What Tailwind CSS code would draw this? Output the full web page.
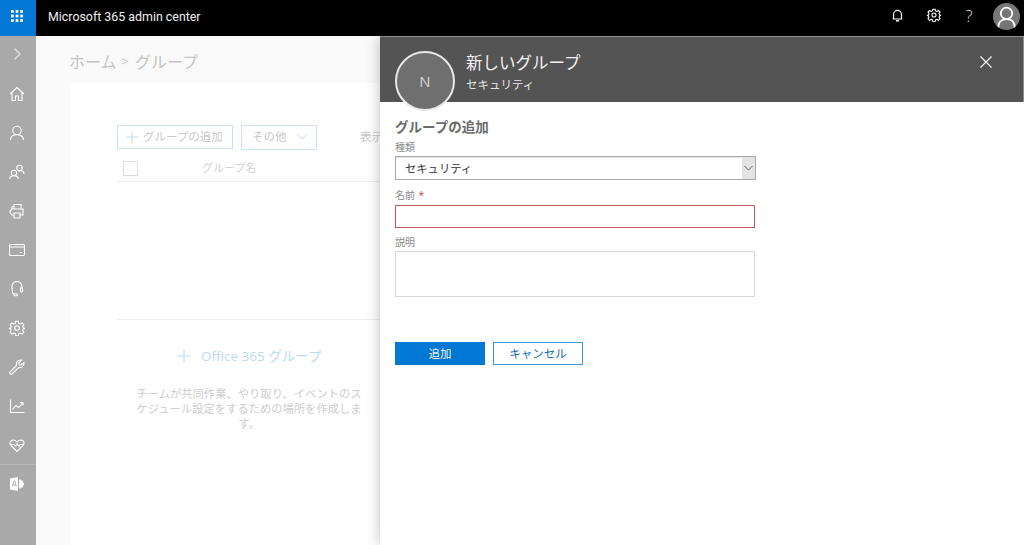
<!DOCTYPE html>
<html lang="ja">
  <head>
    <meta charset="UTF-8" />
    <title>Microsoft 365 admin center</title>
    <script src="https://cdn.jsdelivr.net/npm/@tailwindcss/browser@4"></script>
  </head>
  <body class="h-[545px] w-[1024px] overflow-hidden bg-[#fafafa] font-['Open_Sans','Noto_Sans_CJK_JP',sans-serif]">
    <!-- top bar -->
    <header class="flex h-[36px] items-center bg-black text-white">
      <div class="flex h-[36px] w-[36px] items-center justify-center bg-[#0078d4] pr-[2px] pb-[5px]">
        <svg width="12" height="12" viewBox="0 0 13 13" fill="#fff">
          <rect x="0" y="0" width="3" height="3" /><rect x="5" y="0" width="3" height="3" /><rect x="10" y="0" width="3" height="3" />
          <rect x="0" y="5" width="3" height="3" /><rect x="5" y="5" width="3" height="3" /><rect x="10" y="5" width="3" height="3" />
          <rect x="0" y="10" width="3" height="3" /><rect x="5" y="10" width="3" height="3" /><rect x="10" y="10" width="3" height="3" />
        </svg>
      </div>
      <div class="mb-[2px] ml-[12px] font-['Roboto'] text-[12.400px] text-[#f0f0f0]">Microsoft 365 admin center</div>
      <div class="ml-auto flex items-center text-white">
        <svg class="mr-[24px] mb-[6px]" width="11" height="13" viewBox="0 0 14 16" fill="none" stroke="#fff" stroke-width="1.400">
          <path d="M2 12V6.500a5 5 0 0 1 10 0V12l1 .5H1z" /><path d="M5 14.800h4" stroke-width="1.800" />
        </svg>
        <svg class="mr-[23px] mb-[6px]" width="14" height="14" viewBox="0 0 24 24" fill="none" stroke="#fff" stroke-width="1.800">
          <circle cx="12" cy="12" r="3.500" />
          <path d="M10 2h4l.6 3 2.300 1 2.600-1.700 2.800 2.800-1.700 2.600 1 2.300 3 .6v0l-3 .9-1 2.300 1.700 2.600-2.800 2.800-2.600-1.700-2.300 1-.6 3h-4l-.6-3-2.300-1-2.600 1.700-2.800-2.800 1.700-2.600-1-2.300-3-.9v0l3-.6 1-2.300-1.700-2.600 2.800-2.800 2.600 1.700 2.300-1z" />
        </svg>
        <div class="mr-[19px] mb-[6px] w-[10px] text-center text-[17px] leading-none font-light text-[#ddd]">?</div>
        <div class="mr-[4px] mb-[3px] flex h-[27px] w-[27px] items-center justify-center overflow-hidden rounded-full bg-[#777]">
          <svg width="27" height="27" viewBox="0 0 26 26" fill="none" stroke="#fff" stroke-width="1.700">
            <circle cx="13" cy="10" r="5.500" /><path d="M5 24c0-6 3.500-8.500 8-8.500s8 2.500 8 8.500" />
          </svg>
        </div>
      </div>
    </header>

    <div class="flex h-[509px]">
      <!-- left rail -->
      <nav class="flex w-[36px] shrink-0 flex-col items-center bg-[#a9a9a9] pr-[2px]">
        <div class="flex h-[38px] w-full items-center justify-center pb-[3px]">
          <svg width="16" height="16" viewBox="0 0 16 16" fill="none" stroke="#e8e8e8" stroke-width="1.100"><path d="M5.500 2.500l5.500 5.500-5.500 5.500" /></svg>
        </div>
        <div class="flex h-[39px] w-full items-center justify-center">
          <svg width="16" height="16" viewBox="0 0 16 16" fill="none" stroke="#fff" stroke-width="1.100"><path d="M1 8l7-6.500L15 8M3 6.500V14.500h3.500V10h3v4.500H13V6.500" /></svg>
        </div>
        <div class="flex h-[39px] w-full items-center justify-center">
          <svg width="16" height="16" viewBox="0 0 16 16" fill="none" stroke="#fff" stroke-width="1.100"><circle cx="8" cy="5.500" r="4.200" /><path d="M1.500 15c0-3.500 3-5.300 6.500-5.300s6.500 1.800 6.500 5.300" /></svg>
        </div>
        <div class="flex h-[39px] w-full items-center justify-center">
          <svg width="16" height="16" viewBox="0 0 16 16" fill="none" stroke="#fff" stroke-width="1.100"><circle cx="10.500" cy="4" r="2.700" /><circle cx="5" cy="9" r="2.700" /><path d="M.8 15c0-2.200 1.800-3.400 4.200-3.400S9.200 12.800 9.200 15M9.500 7.200c.6-.4 1.300-.5 2-.5 2 0 3.500 1.200 3.500 3.300" /></svg>
        </div>
        <div class="flex h-[39px] w-full items-center justify-center">
          <svg width="16" height="16" viewBox="0 0 16 16" fill="none" stroke="#fff" stroke-width="1.100"><path d="M5 6V1.500h7V6M5 12H3L1 9.500V8l2-2h11v6h-3" /><path d="M5 10h6v5H5zM3 3.500h2M3 3.500V6" /></svg>
        </div>
        <div class="flex h-[39px] w-full items-center justify-center">
          <svg width="16" height="16" viewBox="0 0 16 16" fill="none" stroke="#fff" stroke-width="1.100"><rect x=".5" y="2.500" width="15" height="11" rx="1" /><path d="M.5 5h15M10.500 10.500h2.500" /></svg>
        </div>
        <div class="flex h-[39px] w-full items-center justify-center">
          <svg width="16" height="16" viewBox="0 0 16 16" fill="none" stroke="#fff" stroke-width="1.100"><path d="M3 8V5.500a5 5 0 0 1 10 0V8" /><rect x="11.500" y="6.500" width="2" height="4.500" rx="1" /><path d="M3 8c0 2.500.8 4.500 2 5.500" /><rect x="5" y="12.800" width="3.500" height="2" rx="1" /></svg>
        </div>
        <div class="flex h-[39px] w-full items-center justify-center">
          <svg width="16" height="16" viewBox="0 0 24 24" fill="none" stroke="#fff" stroke-width="1.600"><circle cx="12" cy="12" r="3.500" /><path d="M10 2h4l.6 3 2.300 1 2.600-1.700 2.800 2.800-1.700 2.600 1 2.300 3 .6v0l-3 .9-1 2.300 1.700 2.600-2.800 2.800-2.600-1.700-2.300 1-.6 3h-4l-.6-3-2.300-1-2.600 1.700-2.800-2.800 1.700-2.600-1-2.300-3-.9v0l3-.6 1-2.300-1.700-2.600 2.800-2.800 2.600 1.700 2.300-1z" /></svg>
        </div>
        <div class="flex h-[39px] w-full items-center justify-center">
          <svg width="16" height="16" viewBox="0 0 16 16" fill="none" stroke="#fff" stroke-width="1.100"><path d="M1.200 12.800L7.500 6.500C6.800 4 8.500 1 11.500 1l1 .2-2.500 2.600.2 2 2 .2 2.600-2.500.2 1c0 3-3 4.700-5.500 4L3.200 14.800a1.400 1.400 0 0 1-2-2z" /></svg>
        </div>
        <div class="flex h-[39px] w-full items-center justify-center">
          <svg width="16" height="16" viewBox="0 0 16 16" fill="none" stroke="#fff" stroke-width="1.100"><path d="M1.500 1.500v13h14" /><path d="M3.500 11.500l3.500-4 2.500 2 4.500-5M11 4.500h3v3" /></svg>
        </div>
        <div class="flex h-[39px] w-full items-center justify-center">
          <svg width="16" height="16" viewBox="0 0 16 16" fill="none" stroke="#fff" stroke-width="1.100"><path d="M8 14.500L2 8.500C.2 6.500 1 3 4.300 3 6 3 7.300 4 8 5c.7-1 2-2 3.700-2C15 3 15.800 6.500 14 8.500z" /><path d="M.8 7.500H5l1.500 1.500 1.500-2 2 2.500 1-2h3.800" /></svg>
        </div>
        <div class="-mr-[2px] flex h-[39px] w-[36px] items-center justify-center border-t border-[#b8b8b8] pr-[2px]">
          <svg width="16" height="16" viewBox="0 0 16 16">
            <path d="M1 2.500L9 1v14l-8-1.500z" fill="#fff" />
            <path d="M10 3.500h1.500l.5 1.200 1.300-.4 1 1-.5 1.200 1.200.7v1.600l-1.200.7.5 1.200-1 1-1.300-.4-.5 1.200H10z" fill="#fff" />
            <path d="M3.300 10.500L5 5h.8l1.400 5.500M3.900 8.800h2.900" fill="none" stroke="#a9a9a9" stroke-width=".9" />
          </svg>
        </div>
      </nav>

      <!-- dimmed page behind the panel -->
      <main class="w-[344px] shrink-0 overflow-hidden">
        <div class="ml-[33px] flex h-[47px] items-center pt-[4px] text-[16px] whitespace-nowrap text-[#c4c4c4]">ホーム<span class="mr-[6px] ml-[5px] text-[13px]">&gt;</span>グループ</div>
        <div class="ml-[34px] h-[462px] w-[400px] bg-white pt-[42px] pl-[47px]">
          <div class="flex h-[24px] w-[300px] items-center">
            <div class="flex h-[24px] w-[116px] items-center border border-[#cfe2f3] pl-[8px] text-[11.5px] whitespace-nowrap text-[#c8c8c8]">
              <svg class="mr-[5px]" width="12" height="12" viewBox="0 0 12 12" stroke="#c4d9ec" stroke-width="1"><path d="M6 0v12M0 6h12" /></svg>グループの追加
            </div>
            <div class="ml-[8px] flex h-[25px] w-[76px] items-center border border-[#cfe2f3] pl-[10px] text-[11.5px] text-[#c8c8c8]">
              その他
              <svg class="ml-[9px]" width="12" height="8" viewBox="0 0 12 8" fill="none" stroke="#c4d9ec" stroke-width="1"><path d="M1 1l5 5 5-5" /></svg>
            </div>
            <div class="ml-[43px] text-[11.5px] whitespace-nowrap text-[#c8c8c8]">表示</div>
          </div>
          <div class="mt-[3px] flex h-[30px] w-[300px] items-center border-b border-[#ededed] pt-[3px] pl-[6px]">
            <div class="h-[15px] w-[15px] border border-[#dcdcdc]"></div>
            <div class="ml-[64px] text-[11px] text-[#d2d2d2]">グループ名</div>
          </div>
          <div class="mt-[137px] w-[300px] border-t border-[#ededed]"></div>
          <div class="mt-[26px] flex w-[263px] items-center pl-[60px] text-[13.5px] whitespace-nowrap text-[#bcdaf5]">
            <svg class="mr-[10px] shrink-0" width="14" height="14" viewBox="0 0 14 14" stroke="#bcdaf5" stroke-width="1"><path d="M7 0v14M0 7h14" /></svg>Office 365 グループ
          </div>
          <p class="mt-[20px] ml-[18px] w-[228px] text-center text-[11.300px] leading-[15px] text-[#cdcdcd]">チームが共同作業、やり取り、イベントのスケジュール設定をするための場所を作成します。</p>
        </div>
      </main>

      <!-- right panel -->
      <section class="relative w-[644px] bg-white shadow-[-2px_0_12px_rgba(0,0,0,0.2)]">
        <div class="flex h-[66px] items-start border-t border-r border-[#8f8f8f] bg-[#545454] pl-[86px] text-white">
          <div>
            <div class="mt-[14px] text-[16.500px] leading-[24px] text-[#f2f2f2]">新しいグループ</div>
            <div class="mt-[2px] text-[11.500px] leading-[16px] text-[#e6e6e6]">セキュリティ</div>
          </div>
          <svg class="mt-[19px] mr-[31px] ml-auto" width="12" height="12" viewBox="0 0 12 12" stroke="#fff" stroke-width="1.100"><path d="M.5.5l11 11M11.500.5l-11 11" /></svg>
        </div>
        <div class="absolute top-[15px] left-[15px] flex h-[60px] w-[60px] items-center justify-center rounded-full border-2 border-[#e9e9e9] bg-[#6f6f6f] text-[15px] text-[#d8d8d8]">N</div>

        <form class="pl-[15px]">
          <div class="pt-[15px] text-[13.500px] leading-[20px] font-bold text-[#6b6b6b]">グループの追加</div>
          <label class="mt-[3px] block text-[10px] leading-[14px] text-[#8a8a8a]">種類</label>
          <div class="mt-[2px] flex h-[24px] w-[361px] items-center border border-[#a8a8a8] shadow-[inset_0_1px_0_#e4e4e4]">
            <span class="mt-[2px] ml-[9px] text-[11.300px] text-[#333]">セキュリティ</span>
            <div class="ml-auto flex h-full w-[13px] items-center justify-center bg-[#e3e3e3]">
              <svg width="9" height="6" viewBox="0 0 9 6" fill="none" stroke="#666" stroke-width="1"><path d="M.5 1l4 4 4-4" /></svg>
            </div>
          </div>
          <label class="mt-[8px] block text-[10px] leading-[14px] text-[#8a8a8a]">名前 <span class="ml-[1px] text-[#c0474a]">*</span></label>
          <div class="mt-[3px] h-[23px] w-[360px] border border-[#c4565a]"></div>
          <label class="mt-[7px] block text-[10px] leading-[14px] text-[#8a8a8a]">説明</label>
          <div class="mt-[2px] h-[46px] w-[360px] border border-[#d8d8d8]"></div>
          <div class="mt-[45px] flex gap-[8px]">
            <button type="button" class="h-[23px] w-[90px] bg-[#0078d4] text-[11.500px] text-[#f2f2f2]">追加</button>
            <button type="button" class="h-[23px] w-[90px] border border-[#3b96e0] bg-white text-[11.500px] text-[#0f6cbd]">キャンセル</button>
          </div>
        </form>
      </section>
    </div>
  </body>
</html>
